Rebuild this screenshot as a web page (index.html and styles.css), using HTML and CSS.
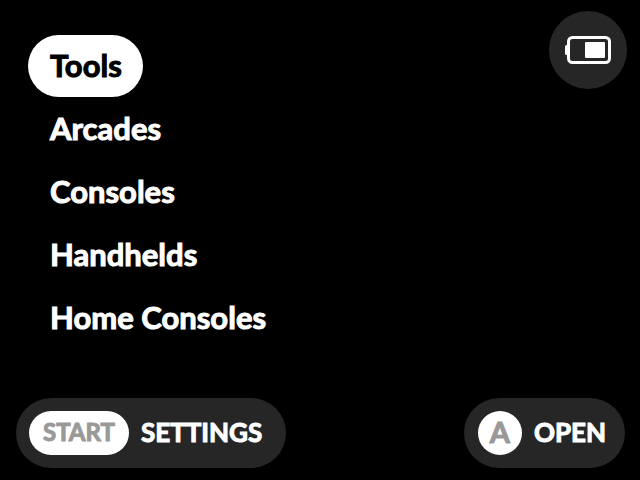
FILE: index.html
```html
<!DOCTYPE html>
<html lang="en">
<head>
<meta charset="utf-8">
<title>Main menu</title>
<link rel="stylesheet" href="styles.css">
</head>
<body>
<main class="screen">
  <section class="top">
    <nav class="menu" aria-label="Main menu">
      <a class="item selected" href="#tools">Tools</a>
      <a class="item" href="#arcades">Arcades</a>
      <a class="item" href="#consoles">Consoles</a>
      <a class="item" href="#handhelds">Handhelds</a>
      <a class="item" href="#home-consoles">Home Consoles</a>
    </nav>
    <div class="battery">
      <svg class="battery-icon" viewBox="0 0 46 28" aria-hidden="true">
        <rect x="3.500" y="1.500" width="41" height="25" rx="4" fill="none" stroke="#fff" stroke-width="3"/>
        <rect x="0" y="9" width="4" height="10" rx="1.500" fill="#fff"/>
        <rect x="20" y="6" width="20" height="16" rx="1" fill="#fff"/>
      </svg>
    </div>
  </section>
  <footer class="hints">
    <button class="hint" type="button"><span class="key">START</span><span class="action">SETTINGS</span></button>
    <button class="hint compact" type="button"><span class="key round">A</span><span class="action">OPEN</span></button>
  </footer>
</main>
</body>
</html>
```
FILE: styles.css
```css
* {
  box-sizing: border-box;
}

body {
  margin: 0;
  background: #000;
  color: #fff;
  font-family: Lato, sans-serif;
  font-weight: 700;
  -webkit-text-stroke: 1px currentColor;
}

.screen {
  display: flex;
  flex-direction: column;
  justify-content: space-between;
  min-height: 100vh;
  padding: 11px 13px 12px 16px;
}

.top {
  display: flex;
  justify-content: space-between;
  align-items: flex-start;
}

.menu {
  display: flex;
  flex-direction: column;
  align-items: flex-start;
  gap: 1px;
  padding: 24px 0 0 12px;
}

.item {
  padding: 0 21px 2px 22px;
  border-radius: 31px;
  color: #fff;
  font-size: 31px;
  line-height: 60px;
  text-decoration: none;
}

.selected {
  background: #fff;
  color: #000;
}

.battery {
  display: grid;
  place-items: center;
  width: 78px;
  height: 78px;
  border-radius: 50%;
  background: #262626;
}

.battery-icon {
  width: 46px;
  height: 28px;
}

.hints {
  display: flex;
  justify-content: space-between;
  padding-right: 2px;
}

.hint {
  display: flex;
  align-items: center;
  gap: 12px;
  height: 70px;
  padding: 0 24px 0 13px;
  border: 0;
  border-radius: 35px;
  background: #262626;
  color: #fff;
  font: inherit;
  font-size: 26px;
}

.compact {
  padding: 0 19px 0 14px;
}

.key {
  padding: 0 14px 2px;
  border-radius: 22px;
  background: #fff;
  color: #999;
  font-size: 24px;
  line-height: 42px;
}

.round {
  width: 44px;
  padding: 0 0 2px;
  font-size: 29px;
  text-align: center;
}

.action {
  padding-bottom: 2px;
}
```
